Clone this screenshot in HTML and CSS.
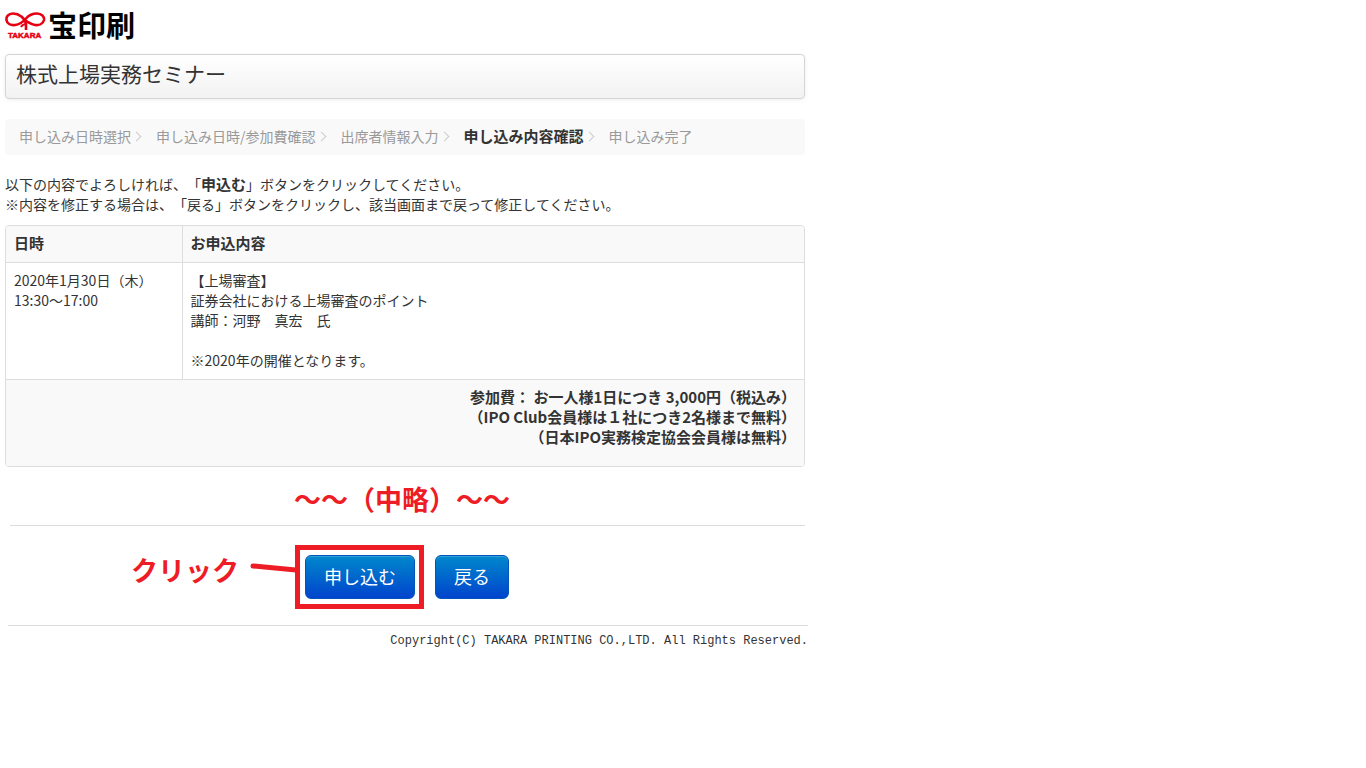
FILE: index.html
```html
<!DOCTYPE html>
<html lang="ja">

<head>
	<meta charset="UTF-8">
	<meta name="viewport" content="width=device-width, initial-scale=1.0">
	<title>株式上場実務セミナー</title>
	<link rel="stylesheet" href="styles.css">
</head>

<body>
	<div class="container">
		<header class="logo">
			<svg class="logo-mark" viewBox="0 0 42 30" width="42" height="30" aria-hidden="true">
				<g fill="none" stroke="#e60012" stroke-width="2.6">
					<path d="M21 20V14C20 8 14 3.500 8 3.500C3 3.500 1 7 1.500 10C2 14 6 15.500 10 15C15 14.500 18 12 21 8.500C24 5 28 3.500 32 3.500C37 3.500 39.500 7 39 10C38 14 34 15.500 30 15C26 14.500 23 12 20 10.500" />
					<path d="M16 17C17 15 19 14 22 14" stroke-width="2" />
				</g>
				<text class="logo-caption" x="3" y="28" fill="#e60012" stroke="#e60012">TAKARA</text>
			</svg>
			<span class="logo-name">宝印刷</span>
		</header>

		<h1>株式上場実務セミナー</h1>

		<ol class="steps">
			<li>申し込み日時選択</li>
			<li>申し込み日時/参加費確認</li>
			<li>出席者情報入力</li>
			<li class="active">申し込み内容確認</li>
			<li>申し込み完了</li>
		</ol>

		<p class="lead">
			以下の内容でよろしければ、「<strong>申込む</strong>」ボタンをクリックしてください。<br>
			※内容を修正する場合は、「戻る」ボタンをクリックし、該当画面まで戻って修正してください。
		</p>

		<table class="entry">
			<thead>
				<tr>
					<th class="date">日時</th>
					<th>お申込内容</th>
				</tr>
			</thead>
			<tbody>
				<tr>
					<td>2020年1月30日（木）<br>13:30～17:00</td>
					<td>【上場審査】<br>証券会社における上場審査のポイント<br>講師：河野　真宏　氏<br><br>※2020年の開催となります。</td>
				</tr>
			</tbody>
			<tfoot>
				<tr>
					<td colspan="2">参加費： お一人様1日につき 3,000円（税込み）<br>（IPO Club会員様は１社につき2名様まで無料）<br>（日本IPO実務検定協会会員様は無料）</td>
				</tr>
			</tfoot>
		</table>

		<p class="omitted">～～（中略）～～</p>

		<form class="actions">
			<span class="note">クリック</span>
			<svg class="pointer" viewBox="0 0 46 28" width="46" height="28" aria-hidden="true">
				<path d="M3 5L46 9" fill="none" stroke="#ee1c25" stroke-width="5" stroke-linecap="round" />
			</svg>
			<span class="highlight"><button type="submit">申し込む</button></span>
			<button type="button">戻る</button>
		</form>

		<footer>Copyright(C) TAKARA PRINTING CO.,LTD. All Rights Reserved.</footer>
	</div>
</body>

</html>
```

FILE: styles.css
```css
* {
	margin: 0;
	padding: 0;
	box-sizing: border-box;
}

body {
	padding: 0 5px;
	background: #fff;
	color: #333;
	font-family: "Noto Sans CJK JP", sans-serif;
	font-size: 14px;
	line-height: 20px;
	text-spacing-trim: space-all;
}

.container {
	max-width: 800px;
}

.logo {
	display: flex;
	align-items: flex-start;
	gap: 1px;
	height: 54px;
	padding-top: 10px;
}

.logo-caption {
	font-family: "Liberation Sans", sans-serif;
	font-size: 8px;
	font-weight: bold;
	stroke-width: 0.5px;
}

.logo-name {
	color: #000;
	font-size: 29px;
	font-weight: bold;
	line-height: 28px;
}

h1 {
	margin-bottom: 20px;
	padding: 8px 10px 14px;
	border: 1px solid #d4d4d4;
	border-radius: 4px;
	background: linear-gradient(#fff, #f2f2f2);
	box-shadow: 0 1px 4px rgba(0, 0, 0, 0.07);
	font-size: 21px;
	font-weight: normal;
	line-height: 21px;
}

.steps {
	display: flex;
	margin-bottom: 19px;
	padding: 7px 14px 9px;
	border-radius: 4px;
	background: #f9f9f9;
	color: #999;
	list-style: none;
}

.steps li {
	display: flex;
	align-items: center;
}

.steps li:not(:last-child)::after {
	content: "";
	width: 6px;
	height: 6px;
	margin: 0 16px 0 2px;
	border-top: 1px solid #ccc;
	border-right: 1px solid #ccc;
	transform: rotate(45deg);
}

.steps .active {
	color: #333;
	font-size: 15px;
	font-weight: bold;
}

.steps .active::after {
	border-width: 2px 2px 0 0;
}

.lead {
	margin-bottom: 11px;
}

.lead strong {
	font-size: 15px;
	font-weight: bold;
}

.entry {
	width: 100%;
	border: 1px solid #ddd;
	border-radius: 4px;
	border-spacing: 0;
	overflow: hidden;
}

.entry th,
.entry td {
	padding: 7px 8px 9px;
	text-align: left;
	vertical-align: top;
}

.entry th {
	background: #f9f9f9;
	font-size: 15px;
}

.entry .date {
	width: 22%;
}

.entry th + th,
.entry td + td {
	border-left: 1px solid #ddd;
}

.entry tbody td,
.entry tfoot td {
	border-top: 1px solid #ddd;
}

.entry tfoot td {
	padding-bottom: 19px;
	background: #f9f9f9;
	font-size: 15px;
	font-weight: bold;
	text-align: right;
}

.omitted,
.note {
	color: #ee1c25;
	font-size: 27px;
	font-weight: bold;
}

.omitted {
	margin-left: 5px;
	padding: 21px 0 15px 284px;
	border-bottom: 1px solid #ddd;
	line-height: 22px;
}

.actions {
	display: flex;
	align-items: center;
	padding: 19px 0 16px 126px;
}

.note {
	padding-bottom: 14px;
}

.pointer {
	align-self: flex-start;
	margin: 16px -1px 0 11px;
}

.highlight {
	margin-right: 11px;
	padding: 5px 4px 5px 5px;
	border: 5px solid #ee1c25;
}

button {
	display: block;
	height: 44px;
	padding: 0 18px 2px;
	border: 1px solid #0055bb;
	border-radius: 6px;
	background: linear-gradient(#0088cc, #0044cc);
	box-shadow: inset 0 1px 0 rgba(255, 255, 255, 0.2);
	color: #fff;
	font-family: inherit;
	font-size: 18px;
	cursor: pointer;
}

footer {
	margin: 0 -3px 0 3px;
	padding-top: 5px;
	border-top: 1px solid #ddd;
	font-family: "Liberation Mono", monospace;
	font-size: 12px;
	text-align: right;
}
```
